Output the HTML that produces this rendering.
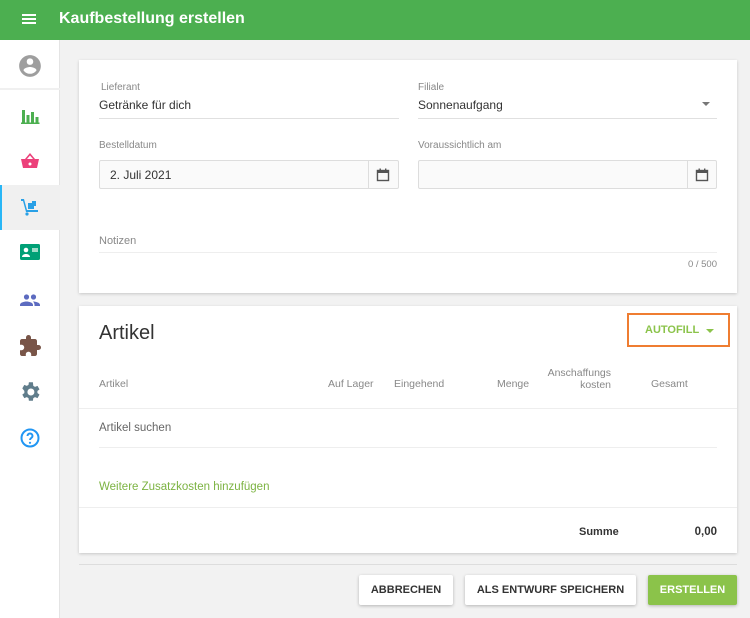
<!DOCTYPE html>
<html><head><meta charset="utf-8"><style>
*{margin:0;padding:0;box-sizing:border-box}
body{width:750px;height:618px;overflow:hidden;background:#f2f2f2;font-family:"Liberation Sans",Roboto,sans-serif;position:relative;color:#333}
.a{position:absolute}
.hdr{left:0;top:0;width:750px;height:40px;background:#4caf50;color:#fff}
.side{left:0;top:40px;width:60px;height:578px;background:#fff;border-right:1px solid #e4e4e4}
.ic{position:absolute;left:18px;width:24px;height:24px}
.card{background:#fff;box-shadow:0 1px 3px rgba(0,0,0,.18)}
.lbl{font-size:10px;color:#888}
.val{font-size:12px;color:#333}
.line{height:1px;background:#e0e0e0}
.inp{border:1px solid #ddd;border-radius:2px;background:#fafafa;height:29px}
.th{font-size:10.5px;color:#888}
.btn{background:#fff;box-shadow:0 1px 3px rgba(0,0,0,.25);border-radius:2px;font-size:11px;font-weight:bold;color:#333;text-align:center;line-height:30px;height:30px}
</style></head><body>
<div class="a hdr">
 <div class="a" style="left:22px;top:14px;width:14px;height:2px;background:#fff;box-shadow:0 4px 0 #fff,0 8px 0 #fff"></div>
 <div class="a" style="left:59px;top:10px;font-size:16px;font-weight:bold;">Kaufbestellung erstellen</div>
</div>
<div class="a side">
 <div class="a" style="left:0;top:48px;width:60px;height:2px;background:#f0f0f0"></div>
 <svg class="ic" style="top:13px;left:17px;width:26px;height:26px" viewBox="0 0 24 24"><path fill="#9e9e9e" d="M12 2C6.5 2 2 6.5 2 12s4.5 10 10 10 10-4.5 10-10S17.5 2 12 2zm0 3c1.7 0 3 1.3 3 3s-1.3 3-3 3-3-1.3-3-3 1.3-3 3-3zm0 14.2c-2.5 0-4.7-1.3-6-3.2 0-2 4-3.1 6-3.1s6 1.1 6 3.1c-1.3 1.9-3.5 3.2-6 3.2z"/></svg>
 <svg class="ic" style="top:64px" viewBox="0 0 24 24"><path fill="#4caf50" d="M4 6h3v13H4zM8.5 11h3v8h-3zM13 8h3v11h-3zM17.5 13h3v6h-3zM3 18.5h18.5v1.5H3z"/></svg>
 <svg class="ic" style="top:109px" viewBox="0 0 24 24"><path fill="#ec407a" d="M7 10l5-6 5 6h4l-2 9H5L3 10zM9 10h6l-3-3.5z"/><circle cx="12" cy="15" r="1.5" fill="#fff"/></svg>
 <div class="a" style="left:0;top:145px;width:60px;height:45px;background:#f0f0f0;border-left:2px solid #29b6f6"></div>
 <svg class="ic" style="top:155px" viewBox="0 0 24 24"><path fill="#29a0e6" d="M3 4h3l3 11h11v2H8L5 6H3zM10 8h6v6h-6zM14 6h4v5h-4z"/><circle cx="9" cy="19" r="1.6" fill="#29a0e6"/></svg>
 <svg class="ic" style="top:200px" viewBox="0 0 24 24"><rect x="2" y="4" width="20" height="16" rx="1.5" fill="#00a076"/><circle cx="8" cy="10" r="2.3" fill="#fff"/><path fill="#fff" d="M4 17c0-2 2-3 4-3s4 1 4 3z"/><rect x="14" y="8" width="6" height="4" fill="#9fdcc8"/></svg>
 <svg class="ic" style="top:248px" viewBox="0 0 24 24"><circle cx="8.5" cy="9" r="2.6" fill="#5c6bc0"/><circle cx="15.5" cy="9" r="2.6" fill="#5c6bc0"/><path fill="#5c6bc0" d="M2 17c0-2.5 4-3.5 6.5-3.5S15 14.5 15 17v1H2zM15 13.5c2.5 0 7 1 7 3.5v1h-5.5v-1c0-1.5-.6-2.5-1.5-3.5z"/></svg>
 <svg class="ic" style="top:294px" viewBox="0 0 24 24"><path fill="#795548" d="M20.5 11H19V7c0-1.1-.9-2-2-2h-4V3.5a2.5 2.5 0 00-5 0V5H4c-1.1 0-2 .9-2 2v3.8h1.5c1.5 0 2.7 1.2 2.7 2.7S5 16.2 3.5 16.2H2V20c0 1.1.9 2 2 2h3.8v-1.5c0-1.5 1.2-2.7 2.7-2.7s2.7 1.200 2.7 2.7V22H17c1.1 0 2-.9 2-2v-4h1.5a2.5 2.5 0 000-5z"/></svg>
 <svg class="ic" style="top:340px" viewBox="0 0 24 24"><path fill="#607d8b" d="M19.4 13c.04-.3.06-.66.06-1s-.02-.7-.06-1l2.1-1.65-2-3.460-2.5 1a7.3 7.3 0 00-1.7-1L14.9 2.3h-4l-.4 2.6c-.6.25-1.2.6-1.7 1l-2.5-1-2 3.46L6.4 11c-.04.3-.06.66-.06 1s.02.7.06 1l-2.1 1.65 2 3.46 2.5-1c.5.4 1.1.75 1.7 1l.4 2.6h4l.4-2.6c.6-.25 1.2-.6 1.7-1l2.5 1 2-3.46zM12.9 15.5a3.5 3.5 0 110-7 3.5 3.5 0 010 7z"/></svg>
 <svg class="ic" style="top:386px" viewBox="0 0 24 24"><circle cx="12" cy="12" r="8.5" fill="none" stroke="#2196f3" stroke-width="2"/><path d="M9.5 10a2.5 2.5 0 015 0c0 2-2.5 2-2.5 4" fill="none" stroke="#2196f3" stroke-width="2"/><circle cx="12" cy="16.8" r="1.1" fill="#2196f3"/></svg>
</div>

<div class="a card" style="left:79px;top:60px;width:658px;height:233px">
 <div class="a lbl" style="left:22px;top:22px">Lieferant</div>
 <div class="a val" style="left:20px;top:38px">Getränke für dich</div>
 <div class="a line" style="left:20px;top:58px;width:300px"></div>
 <div class="a lbl" style="left:339px;top:22px">Filiale</div>
 <div class="a val" style="left:339px;top:38px">Sonnenaufgang</div>
 <div class="a" style="left:623px;top:42px;border:4px solid transparent;border-top:4px solid #777;border-bottom:0"></div>
 <div class="a line" style="left:339px;top:58px;width:299px"></div>
 <div class="a lbl" style="left:20px;top:80px">Bestelldatum</div>
 <div class="a inp" style="left:20px;top:100px;width:300px"><div class="a val" style="left:10px;top:7px">2. Juli 2021</div><div class="a" style="left:268px;top:0;width:1px;height:27px;background:#ddd"></div><svg class="a" style="left:275px;top:6px" width="16" height="16" viewBox="0 0 16 16"><rect x="2.5" y="3.5" width="11" height="10" fill="none" stroke="#555" stroke-width="1.4"/><rect x="2.5" y="3.5" width="11" height="2.5" fill="#555"/><rect x="4.5" y="1.5" width="1.4" height="3" fill="#555"/><rect x="10" y="1.5" width="1.4" height="3" fill="#555"/></svg></div>
 <div class="a lbl" style="left:339px;top:80px">Voraussichtlich am</div>
 <div class="a inp" style="left:339px;top:100px;width:299px"><div class="a" style="left:268px;top:0;width:1px;height:27px;background:#ddd"></div><svg class="a" style="left:275px;top:6px" width="16" height="16" viewBox="0 0 16 16"><rect x="2.5" y="3.5" width="11" height="10" fill="none" stroke="#555" stroke-width="1.4"/><rect x="2.5" y="3.5" width="11" height="2.5" fill="#555"/><rect x="4.5" y="1.5" width="1.4" height="3" fill="#555"/><rect x="10" y="1.5" width="1.4" height="3" fill="#555"/></svg></div>
 <div class="a" style="left:20px;top:175px;font-size:11px;color:#888">Notizen</div>
 <div class="a line" style="left:20px;top:192px;width:618px;background:#eee"></div>
 <div class="a" style="left:600px;top:199px;font-size:9.5px;color:#888;width:38px;text-align:right">0 / 500</div>
</div>

<div class="a card" style="left:79px;top:306px;width:658px;height:247px">
 <div class="a" style="left:20px;top:16px;font-size:20px;color:#333">Artikel</div>
 <div class="a" style="left:548px;top:7px;width:103px;height:34px;border:2px solid #ef7d31"></div>
 <div class="a" style="left:566px;top:18px;font-size:11px;font-weight:bold;color:#8bc34a">AUTOFILL</div>
 <div class="a" style="left:627px;top:23px;border:4px solid transparent;border-top:4px solid #8bc34a;border-bottom:0"></div>
 <div class="a th" style="left:20px;top:72px">Artikel</div>
 <div class="a th" style="left:249px;top:72px">Auf Lager</div>
 <div class="a th" style="left:315px;top:72px">Eingehend</div>
 <div class="a th" style="left:418px;top:72px">Menge</div>
 <div class="a th" style="left:460px;top:61px;width:72px;text-align:right;line-height:12px">Anschaffungs<br>kosten</div>
 <div class="a th" style="left:572px;top:72px">Gesamt</div>
 <div class="a line" style="left:0;top:102px;width:658px;background:#eee"></div>
 <div class="a" style="left:20px;top:116px;font-size:11.5px;color:#666">Artikel suchen</div>
 <div class="a line" style="left:20px;top:141px;width:618px;background:#eee"></div>
 <div class="a" style="left:20px;top:175px;font-size:11.5px;color:#7cb342">Weitere Zusatzkosten hinzufügen</div>
 <div class="a line" style="left:0;top:201px;width:658px;background:#eee"></div>
 <div class="a" style="left:500px;top:220px;font-size:11px;font-weight:bold;color:#333">Summe</div>
 <div class="a" style="left:590px;top:220px;width:48px;text-align:right;font-size:11.5px;font-weight:bold;color:#333">0,00</div>
</div>
<div class="a" style="left:79px;top:564px;width:658px;height:1px;background:#ddd"></div>
<div class="a btn" style="left:359px;top:575px;width:94px">ABBRECHEN</div>
<div class="a btn" style="left:465px;top:575px;width:171px">ALS ENTWURF SPEICHERN</div>
<div class="a btn" style="left:648px;top:575px;width:89px;background:#8bc34a;color:#fff">ERSTELLEN</div>
</body></html>
